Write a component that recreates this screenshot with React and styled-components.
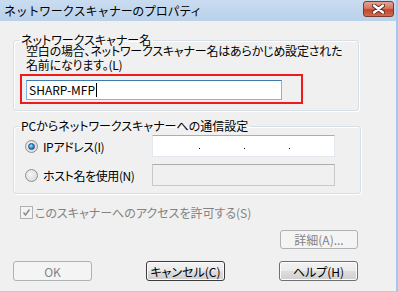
import React from 'react'
import styled, { createGlobalStyle } from 'styled-components'

const GlobalStyle = createGlobalStyle`
  html, body {
    margin: 0;
    padding: 0;
    background: #f0f0f0;
  }
  body {
    font-family: "Noto Sans CJK JP", "Noto Sans", sans-serif;
    font-size: 12px;
    font-feature-settings: "palt";
    color: #000;
  }
  * {
    box-sizing: border-box;
  }
`

const Window = styled.div`
  width: 398px;
  height: 292px;
  display: flex;
  flex-direction: column;
  background: #f0f0f0;
  border-right: 2px solid #9ccbee;
  border-bottom: 1px solid #b3cde6;
  overflow: hidden;
`

const TitleBar = styled.div`
  height: 21px;
  flex-shrink: 0;
  display: flex;
  justify-content: space-between;
  padding: 0 2px 0 4px;
  background: linear-gradient(#c9dcf0, #bad1ea);
`

const Title = styled.span`
  line-height: 21px;
  font-size: 12px;
  font-feature-settings: normal;
  letter-spacing: -0.3px;
`

const CloseButton = styled.div`
  width: 31px;
  height: 16px;
  margin-top: 1px;
  border: 1px solid #7a3a30;
  border-radius: 3px;
  background: linear-gradient(#e6a394 0%, #d6765f 45%, #c4452c 55%, #cf6a4f 100%);
  display: flex;
  align-items: center;
  justify-content: center;
`

const Body = styled.div`
  display: flex;
  flex-direction: column;
  padding: 0 0 0 13px;
`

const Group = styled.fieldset`
  margin: ${p => p.top}px 0 0 0;
  width: ${p => p.width}px;
  min-width: 0;
  padding: 0 0 ${p => p.bottom}px 0;
  border: 1px solid #d5dfe5;
  border-radius: 3px;
  box-shadow: inset 1px 1px 0 #fff, 1px 1px 0 #fff;
`

const Legend = styled.legend`
  margin-left: 5px;
  padding: 0 2px;
  line-height: 10px;
  font-size: 12px;
  white-space: nowrap;
`

const Description = styled.p`
  margin: -1px 0 0 12px;
  line-height: 14px;
  font-size: 12px;
  letter-spacing: -0.2px;
`

const Highlight = styled.div`
  width: 283px;
  height: 30px;
  margin: 2px 0 0 6px;
  border: 2px solid #f01a1a;
  padding: 4px 0 0 4px;
`

const TextInput = styled.div`
  width: 256px;
  height: 20px;
  background: #fff;
  border: 1px solid #7eb4ea;
  border-top-color: #3d7bad;
  padding-left: 2px;
  display: flex;
  align-items: center;
  font-size: 12px;
  line-height: 18px;
`

const Caret = styled.span`
  display: inline-block;
  width: 1px;
  height: 14px;
  background: #000;
  margin-left: 1px;
`

const OptionGrid = styled.div`
  display: grid;
  grid-template-columns: 127px 183px;
  row-gap: 7px;
  margin: 4px 0 0 11px;
`

const RadioLabel = styled.label`
  display: flex;
  align-items: center;
  gap: 5px;
  height: 22px;
  font-size: 12px;
  letter-spacing: -0.4px;
`

const RadioCircle = styled.span`
  width: 13px;
  height: 13px;
  border-radius: 50%;
  border: 1px solid #8e8f8f;
  background: radial-gradient(circle at 40% 40%, #f4f4f4, #d4d4d4);
  display: flex;
  align-items: center;
  justify-content: center;
  flex-shrink: 0;
`

const RadioDot = styled.span`
  width: 7px;
  height: 7px;
  border-radius: 50%;
  background: radial-gradient(circle at 40% 35%, #9fe0ff 0%, #2d8ad6 55%, #0e4f91 100%);
  border: 1px solid #1b4f85;
`

const Field = styled.div`
  height: 22px;
  border: 1px solid ${p => (p.disabled ? '#c9c9c9' : '#e3e9ef')};
  border-top-color: #abadb3;
  background: ${p => (p.disabled ? '#f0f0f0' : '#fff')};
  display: flex;
  align-items: center;
  padding-left: 2px;
`

const IpSegment = styled.span`
  width: 44px;
`

const IpDot = styled.span`
  width: 1px;
  height: 1px;
  margin-top: 4px;
  background: #000;
`

const CheckRow = styled.label`
  display: flex;
  align-items: center;
  gap: 2px;
  margin: 11px 0 0 7px;
  height: 14px;
  color: #838383;
  font-size: 12px;
`

const CheckBox = styled.span`
  width: 13px;
  height: 13px;
  border: 1px solid #b1b1b1;
  background: #f4f4f4;
  display: flex;
  align-items: center;
  justify-content: center;
`

const ButtonRow = styled.div`
  width: 345px;
  display: flex;
  justify-content: ${p => p.justify};
  margin-top: ${p => p.top}px;
`

const Button = styled.div`
  width: ${p => p.width || 79}px;
  height: ${p => p.height || 20}px;
  border: 1px solid ${p => (p.disabled ? '#adb2b5' : '#707070')};
  border-radius: 3px;
  background: ${p =>
    p.disabled
      ? '#f4f4f4'
      : 'linear-gradient(#f2f2f2 0%, #ebebeb 48%, #dddddd 52%, #cfcfcf 100%)'};
  box-shadow: inset 0 0 0 1px ${p => (p.disabled ? '#f4f4f4' : '#fcfcfc')};
  color: ${p => (p.disabled ? '#838383' : '#000')};
  display: flex;
  align-items: center;
  justify-content: center;
  font-size: 12px;
  ${p => p.focused && 'border-color: #3c3c3c;'}
`

const CloseIcon = () => (
  <svg width="13" height="10" viewBox="0 0 13 10">
    <path d="M2 1.5 L11 8.5 M11 1.5 L2 8.5" stroke="#5a2a22" strokeWidth="4.2" strokeLinecap="round" />
    <path d="M2 1.5 L11 8.5 M11 1.5 L2 8.5" stroke="#fff" strokeWidth="2.4" strokeLinecap="round" />
  </svg>
)

const CheckIcon = () => (
  <svg width="9" height="9" viewBox="0 0 9 9">
    <path d="M1.5 4.5 L3.5 7 L7.5 1.5" stroke="#8d8d8d" strokeWidth="1.5" fill="none" />
  </svg>
)

export default function App() {
  return (
    <>
      <GlobalStyle />
      <Window>
        <TitleBar>
          <Title>ネットワークスキャナーのプロパティ</Title>
          <CloseButton>
            <CloseIcon />
          </CloseButton>
        </TitleBar>
        <Body>
          <Group top={14} width={346} bottom={6}>
            <Legend>ネットワークスキャナー名</Legend>
            <Description>
              空白の場合、ネットワークスキャナー名はあらかじめ設定された
              <br />
              名前になります。(L)
            </Description>
            <Highlight>
              <TextInput>
                SHARP-MFP
                <Caret />
              </TextInput>
            </Highlight>
          </Group>

          <Group top={10} width={348} bottom={7}>
            <Legend>PCからネットワークスキャナーへの通信設定</Legend>
            <OptionGrid>
              <RadioLabel>
                <RadioCircle>
                  <RadioDot />
                </RadioCircle>
                IPアドレス(I)
              </RadioLabel>
              <Field>
                <IpSegment />
                <IpDot />
                <IpSegment />
                <IpDot />
                <IpSegment />
                <IpDot />
              </Field>
              <RadioLabel>
                <RadioCircle />
                ホスト名を使用(N)
              </RadioLabel>
              <Field disabled />
            </OptionGrid>
          </Group>

          <CheckRow>
            <CheckBox>
              <CheckIcon />
            </CheckBox>
            このスキャナーへのアクセスを許可する(S)
          </CheckRow>

          <ButtonRow justify="flex-end" top={11}>
            <Button disabled width={78} height={19}>詳細(A)...</Button>
          </ButtonRow>

          <ButtonRow justify="space-between" top={12}>
            <Button disabled>OK</Button>
            <Button focused>キャンセル(C)</Button>
            <Button>ヘルプ(H)</Button>
          </ButtonRow>
        </Body>
      </Window>
    </>
  )
}
